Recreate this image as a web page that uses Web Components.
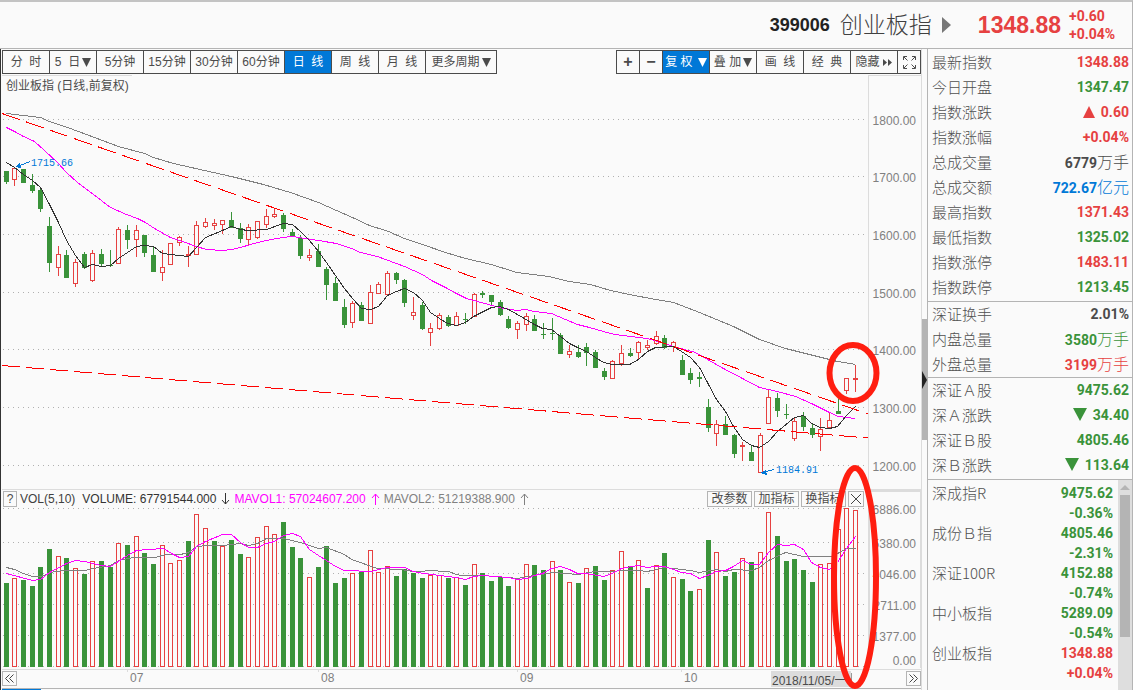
<!DOCTYPE html>
<html lang="zh-CN">
<head>
<meta charset="utf-8">
<title>创业板指 399006</title>
<style>
html,body{margin:0;background:#fafafa}
body{font:12px/16px "Liberation Sans","Noto Sans CJK SC",sans-serif;color:#404040;
--line:#b4b4b4;--soft:#dcdcdc;--up:#e64141;--down:#3a933a;--blue:#0078d7;--ink:#4b4b4b}
</style>
</head>
<body>
<stock-app>
  <quote-header slot="header" code="399006" name="创业板指" price="1348.88" change="+0.60" percent="+0.04%"></quote-header>
  <tool-bar slot="tools">
    <tool-button>分&nbsp; 时</tool-button><tool-button arrow="down">5&nbsp; 日</tool-button><tool-button>5分钟</tool-button><tool-button>15分钟</tool-button><tool-button>30分钟</tool-button><tool-button>60分钟</tool-button><tool-button active>日&nbsp; 线</tool-button><tool-button>周&nbsp; 线</tool-button><tool-button>月&nbsp; 线</tool-button><tool-button size="wide" arrow="down">更多周期</tool-button>
    <tool-button slot="right" size="small"><b>+</b></tool-button><tool-button slot="right" size="small"><b>−</b></tool-button><tool-button slot="right" active arrow="down">复 权&nbsp;</tool-button><tool-button slot="right" arrow="down">叠 加</tool-button><tool-button slot="right">画&nbsp; 线</tool-button><tool-button slot="right">经&nbsp; 典</tool-button><tool-button slot="right" arrow="more">隐藏</tool-button><tool-button slot="right" size="small" arrow="full"></tool-button>
  </tool-bar>
  <price-chart slot="chart">创业板指 (日线,前复权)</price-chart>
  <volume-chart slot="chart"></volume-chart>
  <date-axis slot="chart"></date-axis>
  <quote-table slot="side" group="0"></quote-table>
  <quote-table slot="side" group="1"></quote-table>
  <quote-table slot="side" group="2"></quote-table>
  <index-list slot="side"></index-list>
</stock-app>

<script>
const define = (name, render) => customElements.define(name, class extends HTMLElement {
  connectedCallback() {
    if (this.shadowRoot) return;
    this.attachShadow({ mode: 'open' }).innerHTML = render(this);
  }
});

define('stock-app', () => `
<style>
:host{display:block;box-sizing:border-box;min-height:100vh;border-top:2px solid #c3c3c3;border-right:1px solid var(--line)}
main{display:grid;grid-template-columns:minmax(0,1fr) 6px 205px}
.left{border-left:1px solid #333;padding-left:1px}
.charts{position:relative}
.marks{position:absolute;inset:0;width:100%;height:100%;overflow:visible;pointer-events:none}
.rail{display:grid;grid-template-rows:270px 121px 1fr;border-left:1px solid var(--soft);box-sizing:border-box}
.thumb{background:var(--line);display:flex;align-items:center;justify-content:center}
aside{border-left:1px solid var(--line)}
</style>
<slot name="header"></slot>
<main>
  <div class="left"><slot name="tools"></slot>
    <div class="charts"><slot name="chart"></slot>
      <svg class="marks" viewBox="2 75 919 615" preserveAspectRatio="xMinYMin meet" fill="none" stroke="#ff1e10" stroke-width="6">
        <ellipse cx="853" cy="373" rx="23.500" ry="28"/><ellipse cx="855" cy="577" rx="21" ry="109"/></svg>
    </div>
  </div>
  <div class="rail"><span></span><div class="thumb"><svg width="5" height="18"><path d="M0 0L5 9L0 18z" fill="#222"/></svg></div></div>
  <aside><slot name="side"></slot></aside>
</main>`);

define('quote-header', el => `
<style>
:host{display:flex;justify-content:flex-end;align-items:center;height:46px;border-bottom:1px solid var(--line)}
.code{font-size:18px;font-weight:bold;color:#222;margin-right:10px}
h1{font:300 23px/30px "Noto Sans CJK SC",sans-serif;margin:0 10px 0 0;padding-bottom:4px;color:#404040}
.price{font-size:23px;font-weight:bold;color:var(--up);margin:0 8px 0 27px}
.delta{font:bold 14px/18px Roboto,sans-serif;color:var(--up);width:63px}
.delta span{display:block}
</style>
<span class="code">${el.getAttribute('code')}</span><h1>${el.getAttribute('name')}</h1>
<svg width="9" height="16"><path d="M0 0L9 8L0 16z" fill="#777"/></svg>
<span class="price">${el.getAttribute('price')}</span>
<div class="delta"><span>${el.getAttribute('change')}</span><span>${el.getAttribute('percent')}</span></div>`);

define('tool-bar', () => `
<style>
:host{display:flex;justify-content:space-between;padding:1px 0}
div{display:flex;border:1px solid var(--ink);border-right:0;box-sizing:border-box;height:24px}
</style>
<div><slot></slot></div><div><slot name="right"></slot></div>`);

const ARROWS = {
  down: '<svg width="9" height="9"><path d="M0 0H9L4.5 9z" fill="currentColor"/></svg>',
  more: '<svg width="11" height="9"><path d="M1 1L5 4.5L1 8zM6 1L10 4.5L6 8z" fill="currentColor"/></svg>',
  full: '<svg width="13" height="13" fill="none" stroke="currentColor"><path d="M.5 4V.5H4M9 .5H12.500V4M12.500 9V12.500H9M4 12.500H.5V9M1 1L4.500 4.500M12 1L8.500 4.500M12 12L8.500 8.500M1 12L4.500 8.500"/></svg>'
};
define('tool-button', el => `
<style>
:host{display:block;width:47px}
:host([size=small]){width:23px}
:host([size=wide]){width:71px}
button{display:flex;align-items:center;justify-content:center;gap:2px;width:100%;height:22px;margin:0;padding:0;border:0;border-right:1px solid var(--ink);
background:none;font:inherit;color:var(--ink);white-space:nowrap;box-sizing:border-box}
:host([active]) button{background:var(--blue);color:#fff}
::slotted(b){font-size:16px}
</style>
<button type="button" ${el.getAttribute('arrow') === 'full' ? 'aria-label="全屏"' : ''}><slot></slot>${ARROWS[el.getAttribute('arrow')] || ''}</button>`);

/* One session each: bodyTop bodyBottom high low volumeTop candleColour volumeColour */
const SESSIONS = `171 182 171 184 583 gg|168 180 167 186 578 rr|169 183 169 183 580 gg|185 191 174 193 586 gg|190 209 187 212 567 gg|226 263 217 272 549 gg|254 268 246 276 556 rr|255 278 250 278 558 gg|262 284 259 287 568 rr|254 268 252 269 574 gg|253 281 250 282 561 rr|254 264 249 267 561 gg|265 266 250 267 567 gg|229 264 227 264 543 rr|230 240 225 249 545 gg|230 240 225 257 536 rr|235 253 235 257 553 gg|255 272 246 272 564 gg|267 273 250 281 545 rr|243 265 243 265 563 rr|237 243 236 246 560 rr|254 256 246 267 541 rg|225 255 221 255 514 rr|222 227 218 228 528 rr|223 226 219 230 541 rg|220 225 220 234 546 rr|220 228 212 228 540 gg|228 239 223 243 554 gg|227 240 224 245 557 rr|221 238 221 239 537 rr|216 225 209 228 526 rr|214 217 208 218 534 rr|215 229 213 232 522 gg|232 236 229 237 547 gg|238 256 235 259 558 gg|255 258 249 261 577 rr|251 267 244 267 567 gg|269 285 267 300 546 gg|283 301 277 301 583 gg|307 325 299 328 578 gg|303 323 301 328 573 rr|305 321 302 321 571 gg|292 324 285 324 550 rr|284 294 282 294 572 rr|273 295 271 295 566 rr|273 280 272 284 576 gg|280 303 279 307 569 gg|312 316 297 320 573 rg|305 329 302 330 578 gg|328 333 323 346 575 rr|315 329 313 330 575 rr|317 326 315 327 578 gg|316 326 312 326 577 rr|319 320 313 324 585 gg|294 317 293 317 564 rr|293 295 291 298 573 gg|295 302 295 305 581 gg|302 315 300 316 577 gg|319 328 316 329 586 gg|323 330 321 339 579 rr|316 325 313 331 564 rr|319 331 315 331 565 gg|334 335 323 339 570 gg|333 334 318 340 561 gr|335 354 333 354 570 gg|351 355 345 358 582 rr|352 357 345 358 583 gg|347 353 343 366 568 gr|352 368 350 368 566 gg|371 377 368 380 580 gg|361 379 360 379 570 rr|353 364 345 366 551 rr|353 356 348 357 566 gg|342 353 341 359 560 rr|345 348 340 350 588 rg|336 344 331 345 565 rr|338 348 335 349 553 gg|342 347 341 352 577 rr|360 375 355 375 579 gg|373 380 368 384 591 gg|377 379 372 387 589 gr|407 428 399 432 540 gg|424 434 420 446 552 rr|424 435 416 435 576 gg|435 454 434 458 572 gg|445 447 442 461 558 rr|452 461 445 461 562 gg|435 473 433 473 552 rr|397 424 389 424 512 rr|398 411 393 417 536 gg|414 415 404 419 561 gg|421 439 418 441 559 rg|416 427 412 431 570 gg|428 435 424 438 582 gg|429 437 418 451 564 rr|420 428 413 428 563 rr|411 414 399 414 529 gr|378 391 378 394 508 rr|378 380 365 392 510 rr`
  .split('|').map((s, i) => {
    const [top, bottom, high, low, vol, c] = s.split(' ');
    return { x: Math.floor(6.3 + i * 8.665), top: +top, bottom: +bottom, high: +high, low: +low, vol: +vol, up: c[0] === 'r', volUp: c[1] === 'r' };
  });
const RED = '#e64141', GREEN = '#3a933a';
const bar = (x, y, y2, up) => up && y2 - y > 2
  ? `<rect x="${x - 1.5}" y="${y + .5}" width="4" height="${y2 - y - 1}" fill="#fafafa" stroke="${RED}"/>`
  : `<rect x="${x - 2}" y="${y}" width="5" height="${y2 - y}" fill="${up ? RED : GREEN}"/>`;
const line = (pts, colour) => `<polyline points="${pts}" fill="none" stroke="${colour}" transform="translate(.5 .5)"/>`;
const grid = ys => ys.map(y => `<path d="M3 ${y}.5H866" stroke="#b0b0b0" stroke-dasharray="1 4"/>`).join('');
const labels = rows => rows.map(([y, t]) => `<text x="916" y="${y}" text-anchor="end">${t}</text>`).join('');
const CHART_CSS = `:host{display:block}
svg.plot{display:block;width:100%;height:auto;overflow:visible;shape-rendering:crispEdges}
svg text{font:12px "Liberation Sans",sans-serif;fill:#808080}
svg text.tag{font:10px "Liberation Mono",monospace;fill:#0078d7}`;

define('price-chart', () => `
<style>${CHART_CSS}
header{display:flex;justify-content:space-between;height:21px;color:#4b4b4b}
header p{margin:0;padding:2px 0 0 4px;width:126px;border-top:1px solid var(--soft);line-height:16px;white-space:nowrap}
header i{width:52px;border:1px solid var(--soft);border-width:1px 0 0 1px}
</style>
<header><p><slot></slot></p><i></i></header>
<svg class="plot" viewBox="2 96 919 393">
${grid([119, 176, 234, 292, 349, 407, 465])}
<path d="M868.5 96V489" stroke="#dcdcdc"/>
${SESSIONS.map(s => `<path d="M${s.x + .5} ${s.high}V${s.low}" stroke="${s.up ? RED : GREEN}"/>` + bar(s.x, s.top, s.bottom, s.up)).join('')}
${line('6,113 40,117 49,121 67,127 78,131 94,137 118,146 144,153 153,157 173,163 204,170 231,176 263,184 283,190 290,192 318,202 336,210 352,217 369,225 388,231 404,238 422,244 445,252 465,258 491,264 516,272 548,276 569,281 590,284 610,290 629,294 655,299 673,302 699,312 716,319 733,326 759,339 785,348 813,355 837,361 850,363 855,364', '#808080')}
${line('6,127 14,131 23,136 34,141 44,150 58,163 66,172 77,182 93,194 110,207 126,214 137,218 145,222 154,228 170,237 179,240 196,246 206,249 222,250 231,249 240,247 257,242 266,240 282,237 292,236 318,240 336,243 351,248 360,252 377,256 404,266 422,274 431,280 445,287 456,293 466,298 477,301 499,307 516,310 525,309 534,311 551,313 565,319 577,324 589,327 603,331 614,334 647,338 664,343 673,346 695,352 707,359 723,368 742,378 759,387 768,389 777,391 795,396 811,403 829,412 838,416 846,417 855,418', '#f0f')}
${line('6,162 14,167 23,174 32,180 40,187 49,204 58,222 66,240 75,255 84,267 92,264 101,266 110,265 118,258 127,252 136,246 144,245 153,246 162,253 179,255 188,256 196,247 205,237 222,230 231,226 240,229 248,230 266,229 283,223 292,224 300,231 309,240 318,251 326,262 335,275 344,288 352,298 361,308 370,309 378,306 387,295 396,291 404,288 413,292 422,300 430,312 439,318 447,323 456,325 465,322 473,316 491,307 499,306 508,309 517,314 534,324 542,328 551,329 560,336 569,343 577,347 586,351 595,357 603,362 612,364 629,364 638,359 647,351 655,347 673,346 681,351 690,357 699,367 707,382 716,399 725,411 733,426 742,439 751,445 759,447 768,441 777,431 794,417 803,415 811,423 820,427 829,428 837,426 846,415 855,406', '#333')}
<g stroke="#f00"><path d="M2 113.500L868 414" stroke-dasharray="18.600 6.800"/><path d="M2 365.500L868 438" stroke-dasharray="18 6"/></g>
<g stroke="#0078d7" fill="#0078d7"><path d="M30 161.500L16 167"/><path d="M15 167L20 163L21 168z" stroke="none"/><path d="M774 469.500L761 473"/><path d="M760 473L766 470L767 475z" stroke="none"/></g>
<text class="tag" x="31" y="166">1715.66</text><text class="tag" x="776" y="473">1184.91</text>
${labels([[125, '1800.00'], [182, '1700.00'], [240, '1600.00'], [298, '1500.00'], [355, '1400.00'], [413, '1300.00'], [471, '1200.00']])}
</svg>`);

const trend = (up, colour) => `<svg width="9" height="12" fill="none" stroke="${colour}"><path d="${up ? 'M4.500 12V1M1 5L4.500 1L8 5' : 'M4.500 0V11M1 7L4.500 11L8 7'}"/></svg>`;
define('volume-chart', () => `
<style>${CHART_CSS}
:host{border-top:1px solid var(--soft)}
header{display:flex;align-items:center;height:18px;white-space:nowrap}
header span{display:flex;align-items:center;gap:5px;margin-right:4px}
header .name{margin-right:7px}
header .grow{flex:1}
button{font:inherit;line-height:14px;height:16px;width:45px;padding:0;margin:0 2px 0 0;border:1px solid var(--line);background:#fafafa;color:#4b4b4b;white-space:nowrap}
button.sq{width:14px;margin:0 3px 0 1px}
button.close{width:16px;margin:0 4px 0 0}
header i{width:50px;height:16px;border:solid var(--soft);border-width:2px 1px 0 2px}
</style>
<header><button class="sq" type="button">?</button><span class="name">VOL(5,10)</span>
<span style="color:#333">VOLUME: 67791544.000${trend(false, '#333')}</span>
<span style="color:#f0f">MAVOL1: 57024607.200${trend(true, '#f0f')}</span>
<span style="color:#808080">MAVOL2: 51219388.900${trend(true, '#808080')}</span>
<span class="grow"></span>
<button type="button">改参数</button><button type="button">加指标</button><button type="button">换指标</button><button class="close" type="button" aria-label="关闭"><svg width="12" height="12" stroke="#444" style="display:block;margin:auto"><path d="M1 1L11 11M11 1L1 11"/></svg></button><i></i></header>
<svg class="plot" viewBox="2 508 919 162">
${grid([508, 542, 573, 604, 635, 666])}
<path d="M869 508V668M920.500 508V668" stroke="#dcdcdc" stroke-width="2"/><path d="M2 669.500H921" stroke="#dcdcdc"/>
${SESSIONS.map(s => bar(s.x, s.vol, 667, s.volUp)).join('')}
${line('6,567 14,569 23,573 32,576 40,576 54,571 66,570 84,570 93,568 110,565 118,560 133,557 155,557 165,554 180,554 188,552 196,546 208,545 222,545 240,543 248,545 257,543 266,538 283,538 300,542 318,548 326,547 344,554 351,559 377,568 400,569 413,571 422,571 427,570 448,571 456,574 461,575 482,575 508,577 517,578 527,576 553,572 577,574 595,571 638,570 647,571 664,567 690,570 699,572 716,569 725,571 733,569 751,570 759,567 768,560 785,552 803,556 832,556 846,548 855,548', '#808080')}
${line('6,573 32,580 40,579 49,572 66,563 75,560 84,561 101,565 110,566 127,555 136,550 148,549 163,548 171,553 179,557 188,556 196,546 205,541 222,534 231,534 240,542 248,547 257,547 266,543 274,541 283,535 292,533 300,536 309,549 318,555 326,560 335,566 344,570 357,570 360,571 370,571 387,567 404,567 413,571 423,573 439,575 456,577 465,579 473,576 482,575 508,577 517,579 527,578 534,575 542,573 551,568 560,566 569,569 577,573 586,573 603,576 612,573 621,568 637,565 647,567 655,566 664,566 673,569 681,572 690,573 699,578 707,575 716,571 725,570 733,566 742,560 751,564 759,564 768,552 777,544 785,545 794,544 803,549 811,562 820,567 829,569 837,562 846,548 855,536', '#f0f')}
${labels([[514, '6886.00'], [548, '5380.00'], [579, '4046.00'], [610, '2711.00'], [641, '1377.00'], [665, '0.00']])}
</svg>`);

define('date-axis', () => `
<style>${CHART_CSS}
.row{display:flex;align-items:flex-start}
.row svg.plot{flex:1;min-width:0}
button{width:15px;height:15px;margin:1px 0 0;padding:0;border:1px solid var(--line);background:none}
button svg{display:block;margin:auto}
.foot{border-top:1px solid var(--line);height:1px}
.foot b{display:block;width:39px;height:1px;background:var(--blue)}
</style>
<div class="row"><button type="button" aria-label="向前"><svg width="9" height="9" fill="none" stroke="#444"><path d="M4.500 .5L.5 4.500L4.500 8.500M8.500 .5L4.500 4.500L8.500 8.500"/></svg></button>
<svg class="plot" viewBox="17 670 889 18">
<path d="M127.500 670V672M318.500 670V672M517.500 670V672M681.500 670V672" stroke="#dcdcdc"/>
<text x="130" y="682">07</text><text x="321" y="682">08</text><text x="520" y="682">09</text><text x="684" y="682">10</text>
<path d="M771 671H851V687H771z" fill="#dcdcdc"/><path d="M851.500 673V684" stroke="#999"/>
<text x="772" y="685" style="font-family:'Liberation Sans','Noto Sans CJK SC',sans-serif;fill:#4b4b4b">2018/11/05/一</text>
</svg>
<button type="button" aria-label="向后"><svg width="9" height="9" fill="none" stroke="#444"><path d="M.5 .5L4.500 4.500L.5 8.500M4.500 .5L8.500 4.500L4.500 8.500"/></svg></button></div>
<div class="foot"><b></b></div>`);

const QUOTES = [[
  ['最新指数', '1348.88', 'up'], ['今日开盘', '1347.47', 'down'], ['指数涨跌', '0.60', 'up', '', 'rise'], ['指数涨幅', '+0.04%', 'up'],
  ['总成交量', '6779', 'flat', '万手'], ['总成交额', '722.67', 'blue', '亿元'], ['最高指数', '1371.43', 'up'], ['最低指数', '1325.02', 'down'],
  ['指数涨停', '1483.11', 'up'], ['指数跌停', '1213.45', 'down']
], [
  ['深证换手', '2.01%', 'flat'], ['内盘总量', '3580', 'down', '万手'], ['外盘总量', '3199', 'up', '万手']
], [
  ['深证Ａ股', '9475.62', 'down'], ['深Ａ涨跌', '34.40', 'down', '', 'fall'], ['深证Ｂ股', '4805.46', 'down'], ['深Ｂ涨跌', '113.64', 'down', '', 'fall']
]];
const MARKS = {
  rise: '<svg width="12" height="12"><path d="M0 12L6 0L12 12z" fill="currentColor"/></svg>',
  fall: '<svg width="14" height="13"><path d="M0 0H14L7 13z" fill="currentColor"/></svg>'
};
const TABLE_CSS = `table{width:100%;border-collapse:collapse}
th{padding:0;text-align:left;font:300 15px/20px "Noto Sans CJK SC",sans-serif;color:#505050;white-space:nowrap}
td{padding:0;text-align:right;font:bold 14px/20px Roboto,"Noto Sans CJK SC",sans-serif;white-space:nowrap}
td small{font:300 16px/20px "Noto Sans CJK SC",sans-serif}
td svg{margin-right:6px;vertical-align:-1px}
.up{color:var(--up)}.down{color:var(--down)}.flat{color:#4b4b4b}.blue{color:var(--blue)}`;
define('quote-table', el => `
<style>${TABLE_CSS}
:host{display:block;padding:0 3px 0 4px;border-bottom:1px solid var(--line)}
:host([group="0"]){padding-bottom:2px}
:host([group="2"]){padding-bottom:1px}
tr{height:25px}
:host(:not([group="0"])) :is(th,td){padding-bottom:2px}
</style>
<table>${QUOTES[el.getAttribute('group')].map(([n, v, c, unit, mark]) => `<tr><th scope="row">${n}</th><td class="${c}">${MARKS[mark] || ''}${v}${unit ? `<small>${unit}</small>` : ''}</td></tr>`).join('')}</table>`);

define('index-list', () => `
<style>${TABLE_CSS}
:host{display:grid;grid-template-columns:1fr 14px;column-gap:5px;padding-left:4px}
table{margin-top:3px;align-self:start}
td span{display:block}
th{vertical-align:top}
.bar{background:#dedede;display:flex;flex-direction:column;align-items:center;min-height:210px}
.bar svg{margin:5px 0}
.bar b{width:10px;height:142px;background:var(--line)}
</style>
<table>${[['深成指R', '9475.62', '-0.36%', 'down'], ['成份Ｂ指', '4805.46', '-2.31%', 'down'], ['深证100R', '4152.88', '-0.74%', 'down'], ['中小板指', '5289.09', '-0.54%', 'down'], ['创业板指', '1348.88', '+0.04%', 'up']]
  .map(([n, v, p, c]) => `<tr><th scope="row">${n}</th><td class="${c}"><span>${v}</span><span>${p}</span></td></tr>`).join('')}</table>
<div class="bar"><svg width="10" height="5"><path d="M0 5L5 0L10 5z" fill="#b4b4b4"/></svg><b></b></div>`);
</script>
</body>
</html>
